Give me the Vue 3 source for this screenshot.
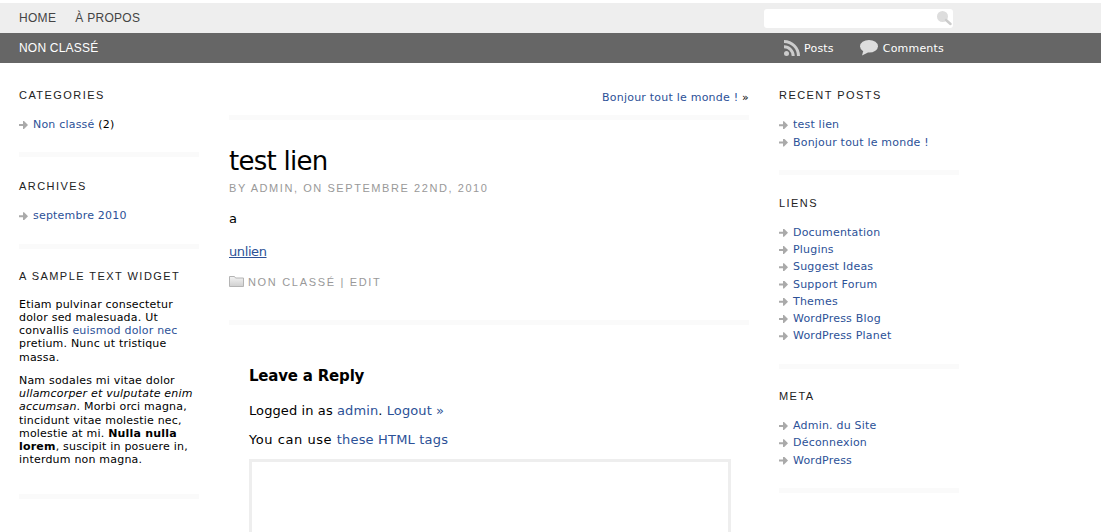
<script setup>
const recent = ['test lien', 'Bonjour tout le monde !']
const liens = ['Documentation', 'Plugins', 'Suggest Ideas', 'Support Forum', 'Themes', 'WordPress Blog', 'WordPress Planet']
const meta = ['Admin. du Site', 'Déconnexion', 'WordPress']
</script>

<template>
  <div class="page">
    <nav class="top">
      <div class="menu"><span>HOME</span><span>À PROPOS</span></div>
      <div class="search">
        <svg width="16" height="16" viewBox="0 0 16 16"><circle cx="6.500" cy="6.500" r="5.500" fill="#ddd"/><path d="M10 10l4.500 4" stroke="#ccc" stroke-width="2.400" stroke-linecap="round"/></svg>
      </div>
    </nav>
    <div class="bar">
      <span class="cat">NON CLASSÉ</span>
      <div class="feeds">
        <span class="feed">
          <svg width="16" height="16" viewBox="0 0 16 16"><circle cx="2.500" cy="13.500" r="2.500" fill="#ccc"/><path d="M0 6.800a9.200 9.200 0 0 1 9.200 9.200M0 1.500a14.500 14.500 0 0 1 14.500 14.500" fill="none" stroke="#ccc" stroke-width="3"/></svg>
          <span class="ft">Posts</span>
        </span>
        <span class="feed wide">
          <svg width="18" height="16" viewBox="0 0 18 16"><ellipse cx="9" cy="6.300" rx="9" ry="6.300" fill="#ddd"/><path d="M3.500 10l-1.500 5.500 6-3z" fill="#ddd"/></svg>
          <span class="ft">Comments</span>
        </span>
      </div>
    </div>

    <div class="cols">
      <aside class="side">
        <section class="widget first">
          <h3>CATEGORIES</h3>
          <ul><li><a>Non classé</a> (2)</li></ul>
        </section>
        <section class="widget second">
          <h3>ARCHIVES</h3>
          <ul><li><a>septembre 2010</a></li></ul>
        </section>
        <section class="widget text">
          <h3>A SAMPLE TEXT WIDGET</h3>
          <p>Etiam pulvinar consectetur dolor sed malesuada. Ut convallis <a>euismod dolor nec</a> pretium. Nunc ut tristique massa.</p>
          <p>Nam sodales mi vitae dolor <em>ullamcorper et vulputate enim accumsan</em>. Morbi orci magna, tincidunt vitae molestie nec, molestie at mi. <strong>Nulla nulla lorem</strong>, suscipit in posuere in, interdum non magna.</p>
        </section>
      </aside>

      <main class="main">
        <div class="pager"><a>Bonjour tout le monde !</a> »</div>
        <article class="post">
          <h1>test lien</h1>
          <div class="by">BY ADMIN, ON SEPTEMBRE 22ND, 2010</div>
          <p class="a">a</p>
          <p class="un"><a>unlien</a></p>
          <div class="info">
            <svg width="15" height="11" viewBox="0 0 15 11">
              <defs><linearGradient id="fold" x1="0" y1="0" x2="0" y2="1"><stop offset="0" stop-color="#f4f4f4"/><stop offset="1" stop-color="#cfcfcf"/></linearGradient></defs>
              <path d="M.5 10.500v-10h5l1 1.500h8v8.500z" fill="url(#fold)" stroke="#b4b4b4"/>
            </svg>
            <span>NON CLASSÉ | EDIT</span>
          </div>
        </article>
        <div class="respond">
          <h2>Leave a Reply</h2>
          <p class="l1">Logged in as <a>admin</a>. <a>Logout »</a></p>
          <p class="l2">You can use <a>these HTML tags</a></p>
          <div class="box"></div>
        </div>
      </main>

      <aside class="side right">
        <section class="widget">
          <h3>RECENT POSTS</h3>
          <ul><li v-for="r in recent" :key="r"><a>{{ r }}</a></li></ul>
        </section>
        <section class="widget links">
          <h3>LIENS</h3>
          <ul><li v-for="r in liens" :key="r"><a>{{ r }}</a></li></ul>
        </section>
        <section class="widget">
          <h3>META</h3>
          <ul><li v-for="r in meta" :key="r"><a>{{ r }}</a></li></ul>
        </section>
      </aside>
    </div>
  </div>
</template>

<style>
html, body { margin: 0; background: #fff; overflow: hidden; }
</style>

<style scoped>
.page { width: 1101px; height: 532px; overflow: hidden; padding-top: 3px; box-sizing: border-box; font: 11px/17.250px Verdana, "DejaVu Sans", sans-serif; letter-spacing: 0.2px; color: #000; }
a { color: #2c5197; }
.top { height: 30px; background: #eee; display: flex; align-items: center; justify-content: space-between; padding: 0 148px 0 19px; font: 12px "Liberation Sans", sans-serif; letter-spacing: 0.3px; color: #444; }
.menu { display: flex; gap: 19px; }
.search { width: 189px; height: 19px; background: #fff; border-radius: 3px; display: flex; justify-content: flex-end; align-items: center; padding-right: 1px; box-sizing: border-box; }
.bar { height: 30px; background: #666; color: #fff; display: flex; align-items: center; justify-content: space-between; padding: 0 157px 0 19px; }
.cat { font: 12px "Liberation Sans", sans-serif; letter-spacing: 0.2px; }
.feeds { display: flex; gap: 26px; }
.feed { display: flex; align-items: center; gap: 4px; }
.feed.wide { gap: 5px; }
.ft { padding-top: 1px; }
.cols { display: flex; padding: 0 0 0 19px; gap: 30px; align-items: flex-start; }
.side { width: 180px; flex: none; padding-top: 25px; }
.side.right { padding-top: 25.300px; }
.widget { border-bottom: 5px solid #fafafa; padding-bottom: 19px; margin-bottom: 21px; }
.widget.first { margin-bottom: 22px; }
.widget.second { margin-bottom: 20px; }
.widget.links { margin-bottom: 20.500px; }
h3 { margin: 0 0 14px; font: 400 11px/14px "Liberation Sans", sans-serif; letter-spacing: 1.450px; color: #222; }
ul { list-style: none; margin: 0; padding: 0; }
li { padding-left: 14px; position: relative; }
li::before { content: ""; position: absolute; left: 0; top: 5px; width: 9px; height: 8px; background: #aaa; clip-path: polygon(0 3px, 4px 3px, 4px 0, 5px 0, 9px 4px, 5px 8px, 4px 8px, 4px 5px, 0 5px); }
.text { padding-bottom: 17px; }
.text p { margin: 0 0 10px; line-height: 13.250px; }
.text p:first-of-type { padding-top: 1px; }
.main { width: 520px; flex: none; }
.pager { text-align: right; padding-top: 26px; height: 26px; border-bottom: 5px solid #fafafa; letter-spacing: 0.220px; }
.post { border-bottom: 5px solid #fafafa; height: 205px; box-sizing: border-box; padding-top: 26px; }
h1 { margin: 0; font: 400 26px/30px Verdana, "DejaVu Sans", sans-serif; letter-spacing: -0.750px; }
.by { font: 11px/14px "Liberation Sans", sans-serif; letter-spacing: 1.570px; color: #999; margin-top: 5px; }
.a { margin: 15px 0 0; font-size: 13px; }
.un { margin: 16px 0 0; font-size: 13px; letter-spacing: -0.4px; }
.un a { text-decoration: underline; }
.info { margin-top: 15px; display: flex; align-items: center; gap: 4px; font: 11px "Liberation Sans", sans-serif; letter-spacing: 1.680px; color: #999; }
.respond { padding: 42px 18px 0 20px; }
h2 { margin: 0; font: 700 15px/18px Verdana, "DejaVu Sans", sans-serif; letter-spacing: -0.2px; }
.l1 { margin: 17px 0 0; font-size: 13px; letter-spacing: 0.1px; line-height: 17.500px; }
.l2 { margin: 11px 0 0; font-size: 13px; letter-spacing: 0.550px; line-height: 17.500px; }
.l2 a { letter-spacing: 0.180px; }
.box { margin-top: 11px; height: 200px; border: 3px solid #eee; }
</style>
